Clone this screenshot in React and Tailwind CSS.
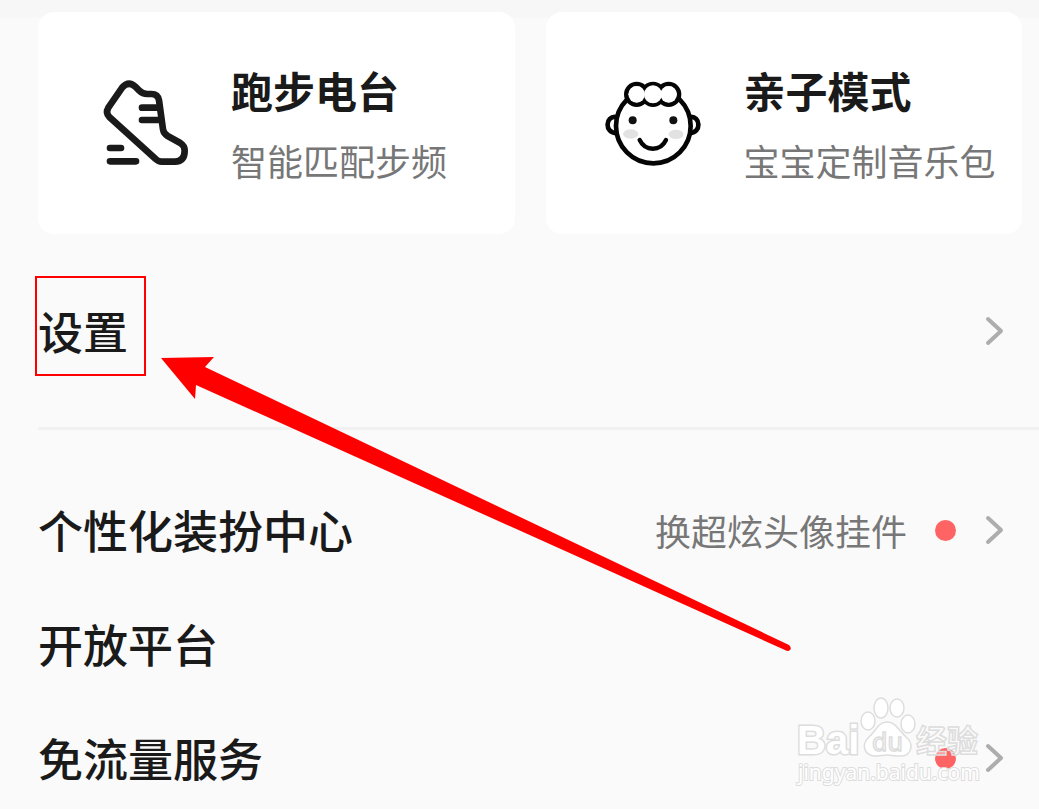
import React from "react";

function ShoeIcon() {
  return (
    <svg viewBox="0 0 360 360" className="mb-1.5 size-[120px] shrink-0" fill="none" stroke="#1a1a1a" strokeWidth="20" strokeLinecap="round" strokeLinejoin="round" aria-hidden="true">
      <path d="M97 82 Q116 62 136 80 L147 91 Q158 102 172 102 L184 102 Q204 102 207 121 L219 208 Q221 221 233 228 L271 249 Q284 257 284 272 Q284 304 255 305 L215 305 Q205 305 197 297 L58 171 Q46 158 55 143 Z" />
      <path d="M156 143 H207 M156 180 H210 M60 264 H93 M60 304 H138" />
    </svg>
  );
}

function BabyIcon() {
  return (
    <svg viewBox="39 0 360 360" className="mb-1.5 size-[120px] shrink-0" fill="none" stroke="#050505" strokeWidth="14" strokeLinecap="round" aria-hidden="true">
      <path d="M78 171 C46 167 42 219 80 219 M300 171 C332 167 336 219 298 219" />
      <circle cx="190" cy="198" r="112" fill="#fff" />
      <g>
        <circle cx="140" cy="103" r="31" />
        <circle cx="189" cy="103" r="31" />
        <circle cx="236" cy="103" r="31" />
      </g>
      <g stroke="none" fill="#fff">
        <circle cx="140" cy="103" r="25" />
        <circle cx="189" cy="103" r="27" />
        <circle cx="236" cy="103" r="25" />
      </g>
      <g stroke="none">
        <ellipse cx="122" cy="222" rx="23" ry="14" fill="#e2e2e2" />
        <ellipse cx="258" cy="223" rx="22" ry="14" fill="#e2e2e2" />
        <circle cx="128" cy="181" r="12" fill="#111" />
        <circle cx="250" cy="181" r="12" fill="#111" />
      </g>
      <path d="M149 240 C166 275 211 275 228 240" strokeWidth="13" />
    </svg>
  );
}

function Chevron() {
  return (
    <svg viewBox="0 0 24 36" className="h-9 w-6 shrink-0" fill="none" stroke="#adadad" strokeWidth="4" strokeLinecap="round" strokeLinejoin="round" aria-hidden="true">
      <path d="M5 6 L18 18 L5 30" />
    </svg>
  );
}

function Card({ icon, title, note, pad }) {
  return (
    <a href="#" className={`flex h-[222px] min-w-0 items-center gap-[21px] rounded-2xl bg-white ${pad}`}>
      {icon}
      <div className="pt-1 whitespace-nowrap">
        <h2 className="text-[42px] leading-[70px] font-bold text-[#1a1a1a]">{title}</h2>
        <p className="text-[36px] leading-[70px] text-[#777777]">{note}</p>
      </div>
    </a>
  );
}

function Row({ label, note, dot, arrow }) {
  return (
    <a href="#" className="flex h-[114px] items-center pr-8 pl-[38px] whitespace-nowrap">
      <span className="text-[45px] leading-[60px] font-medium text-[#1a1a1a]">{label}</span>
      <span className="ml-auto text-[36px] leading-[48px] text-[#777777]">{note}</span>
      {dot && <span className="ml-7 size-[21px] rounded-full bg-[#ff6464]" />}
      {arrow && <span className="ml-[27px]"><Chevron /></span>}
    </a>
  );
}

function Annotation() {
  return (
    <svg viewBox="0 0 1039 809" className="pointer-events-none absolute top-0 left-0 h-[809px] w-[1039px]" aria-hidden="true">
      <rect x="36" y="277" width="109" height="98" fill="none" stroke="#ff0000" strokeWidth="2" />
      <path d="M161 358 L214 357 L205 367 L789 645 Q792 648 790 650 Q788 652 785 650 L196 385 L195 399 Z" fill="#ff0000" />
    </svg>
  );
}

function Watermark() {
  return (
    <svg viewBox="0 0 259 129" className="pointer-events-none absolute top-[680px] left-[780px] h-[129px] w-[259px]" stroke="#dddddd" strokeWidth="1.5" fill="#ffffff" aria-hidden="true">
      <text x="17" y="74" fontFamily="Liberation Sans" fontWeight="700" fontSize="40" paintOrder="stroke" strokeWidth="3">Bai</text>
      <ellipse cx="88" cy="41" rx="7" ry="9" />
      <ellipse cx="101" cy="28" rx="7" ry="10" />
      <ellipse cx="117" cy="28" rx="7" ry="9" />
      <ellipse cx="128" cy="44" rx="7" ry="9" />
      <path d="M107 42 C116 42 119 51 126 57 C135 64 131 76 121 76 C114 76 111 75 107 75 C103 75 100 76 94 76 C84 75 81 64 89 57 C96 51 98 42 107 42 Z" />
      <text x="92" y="71" fontFamily="Noto Sans" fontWeight="400" fontSize="25">du</text>
      <text x="136" y="72" fontFamily="Noto Sans CJK SC" fontWeight="700" fontSize="31" fillOpacity="0.4">经验</text>
      <text x="18" y="100" fontFamily="Noto Sans" fontSize="21" paintOrder="stroke" strokeWidth="2">jingyan.baidu.com</text>
    </svg>
  );
}

export default function App() {
  return (
    <main className="relative min-h-screen overflow-hidden bg-[#fafafa] font-['Noto_Sans_CJK_SC',sans-serif]">
      <section className="bg-linear-to-b from-[#f7f7f7] from-[17px] to-[#fafafa] to-[18px] pt-3 pr-[17px] pl-[38px]">
        <div className="grid grid-cols-2 gap-[31px]">
          <Card icon={<ShoeIcon />} title="跑步电台" note="智能匹配步频" pad="pl-[52px]" />
          <Card icon={<BabyIcon />} title="亲子模式" note="宝宝定制音乐包" pad="pl-[57px]" />
        </div>
      </section>
      <nav>
        <div className="pt-10">
          <Row label="设置" arrow />
        </div>
        <hr className="mt-[39px] ml-[38px] border-t-[3px] border-[#f1f1f1]" />
        <div className="pt-[43px]">
          <Row label="个性化装扮中心" note="换超炫头像挂件" dot arrow />
          <Row label="开放平台" />
          <Row label="免流量服务" dot arrow />
        </div>
      </nav>
      <Annotation />
      <Watermark />
    </main>
  );
}
